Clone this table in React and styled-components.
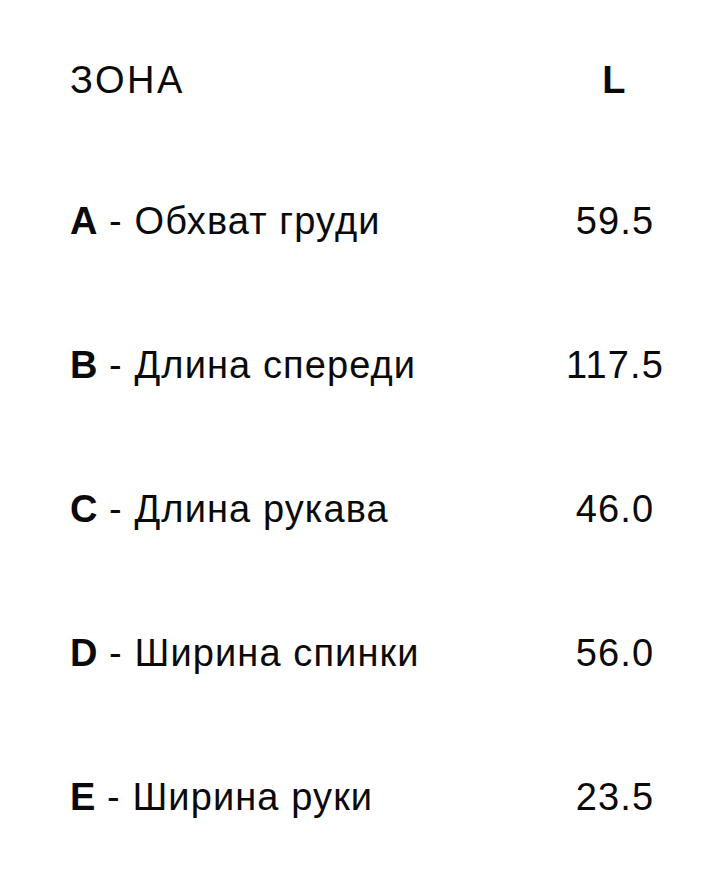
import React from "react";
import styled, { createGlobalStyle } from "styled-components";

const Global = createGlobalStyle`
  html, body { margin: 0; padding: 0; background: #ffffff; }
  body { font-family: "Liberation Sans", Arial, sans-serif; color: #0a0a0a; }
`;

const Table = styled.div`
  width: 720px;
  padding: 11px 45px 0 70px;
  box-sizing: border-box;
  display: grid;
  grid-template-columns: 1fr 120px;
`;

const Cell = styled.div`
  height: ${(p) => (p.$head ? 138 : 144)}px;
  display: flex;
  align-items: center;
  justify-content: ${(p) => (p.$value ? "center" : "flex-start")};
  font-size: 38px;
  font-weight: ${(p) => (p.$bold ? 700 : 400)};
  letter-spacing: ${(p) => (p.$head ? "2.5px" : "1.1px")};
  white-space: nowrap;
`;

const Letter = styled.b`
  font-weight: 700;
  letter-spacing: 0;
`;

const rows = [
  ["A", "Обхват груди", "59.5"],
  ["B", "Длина спереди", "117.5"],
  ["C", "Длина рукава", "46.0"],
  ["D", "Ширина спинки", "56.0"],
  ["E", "Ширина руки", "23.5"],
];

export default function App() {
  return (
    <>
      <Global />
      <Table>
        <Cell $head>ЗОНА</Cell>
        <Cell $head $value $bold>L</Cell>
        {rows.map(([l, name, v]) => (
          <React.Fragment key={l}>
            <Cell>
              <Letter>{l}</Letter>&nbsp;- {name}
            </Cell>
            <Cell $value>{v}</Cell>
          </React.Fragment>
        ))}
      </Table>
    </>
  );
}
